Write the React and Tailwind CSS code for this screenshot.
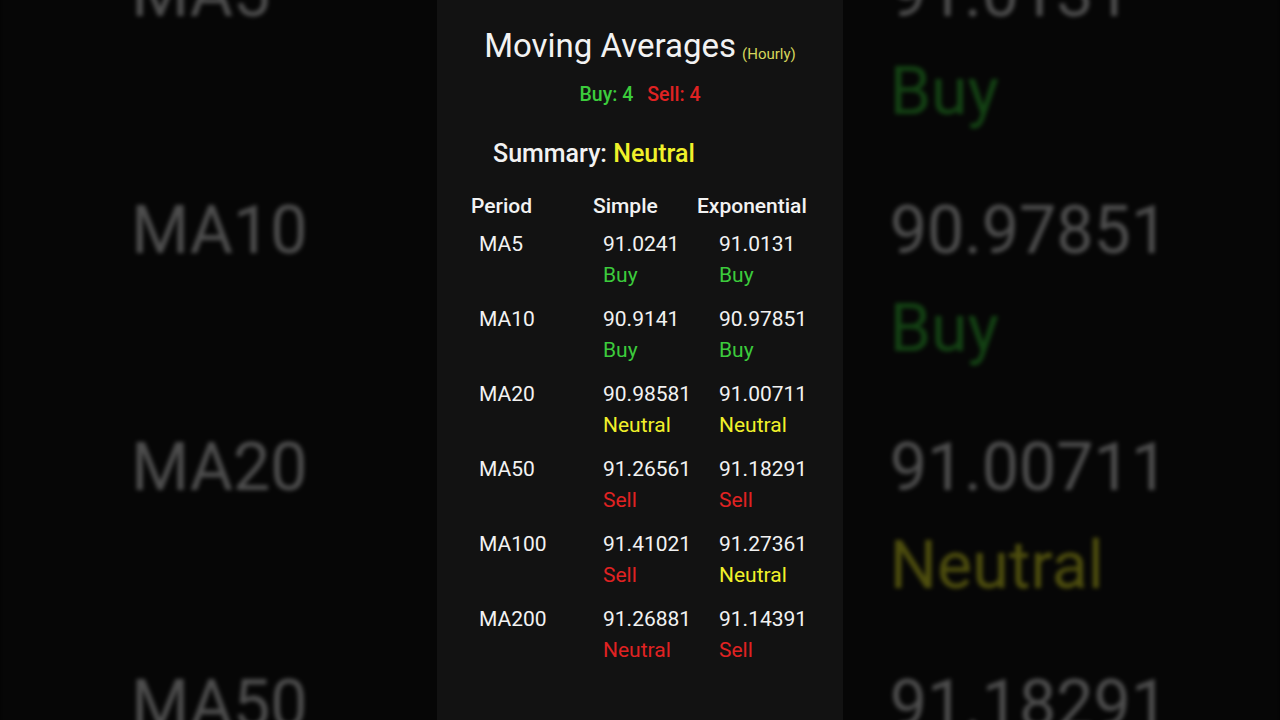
import React from 'react'

const rows = [
    { period: 'MA5', simple: '91.0241', simpleSignal: 'Buy', exp: '91.0131', expSignal: 'Buy' },
    { period: 'MA10', simple: '90.9141', simpleSignal: 'Buy', exp: '90.97851', expSignal: 'Buy' },
    { period: 'MA20', simple: '90.98581', simpleSignal: 'Neutral', exp: '91.00711', expSignal: 'Neutral' },
    { period: 'MA50', simple: '91.26561', simpleSignal: 'Sell', exp: '91.18291', expSignal: 'Sell' },
    { period: 'MA100', simple: '91.41021', simpleSignal: 'Sell', exp: '91.27361', expSignal: 'Neutral' },
    // the app paints this one red even though it says Neutral
    { period: 'MA200', simple: '91.26881', simpleSignal: 'Neutral', simpleColor: 'text-[#e02222]', exp: '91.14391', expSignal: 'Sell' },
]

const signalColor = {
    Buy: 'text-[#3ccb3c]',
    Sell: 'text-[#e02222]',
    Neutral: 'text-[#f0f02a]',
}

const Panel = () => {
    return (
        <div className="w-[406px] h-full bg-[#121212] text-[#f2f2f2] font-[Roboto,sans-serif]">
            <div className="pt-[26px] h-[66px] flex items-baseline justify-center">
                <span className="text-[33px] leading-[40px]">Moving Averages</span>
                <span className="ml-[6px] text-[15px] text-[#d6d65c] translate-y-[2px]">(Hourly)</span>
            </div>

            <div className="mt-[17px] h-[24px] flex justify-center gap-[14px] text-[19.5px] leading-[24px] font-medium">
                <span className="text-[#3ccb3c]">Buy: 4</span>
                <span className="text-[#e02222]">Sell: 4</span>
            </div>

            <p className="mt-[31px] pl-[56px] text-[25px] leading-[32px] font-medium">
                Summary: <span className="text-[#f0f02a]">Neutral</span>
            </p>

            <div className="mt-[21px] pl-[34px] grid grid-cols-[122px_104px_1fr] text-[21px] leading-[31px] font-medium">
                <span>Period</span>
                <span>Simple</span>
                <span>Exponential</span>
            </div>

            <div className="mt-[7px] pl-[34px] flex flex-col gap-[13px]">
                {rows.map((row) => (
                    <div key={row.period} className="grid grid-cols-[122px_104px_1fr] text-[21px] leading-[31px]">
                        <span className="pl-[8px]">{row.period}</span>
                        <div className="pl-[10px] flex flex-col">
                            <span>{row.simple}</span>
                            <span className={row.simpleColor || signalColor[row.simpleSignal]}>{row.simpleSignal}</span>
                        </div>
                        <div className="pl-[22px] flex flex-col">
                            <span>{row.exp}</span>
                            <span className={signalColor[row.expSignal]}>{row.expSignal}</span>
                        </div>
                    </div>
                ))}
            </div>
        </div>
    )
}

const App = () => {
    return (
        <div className="relative w-full h-[720px] overflow-hidden bg-black">
            {/* blurred, zoomed copy behind, like the shorts frame fill */}
            <div aria-hidden="true" className="absolute inset-0 overflow-hidden">
                <div className="w-[1280px] h-[720px] flex justify-center origin-center scale-[3.16] brightness-[0.32] blur-[0.6px]">
                    <Panel />
                </div>
            </div>
            <div className="relative h-full flex justify-center">
                <Panel />
            </div>
        </div>
    )
}

export default App
